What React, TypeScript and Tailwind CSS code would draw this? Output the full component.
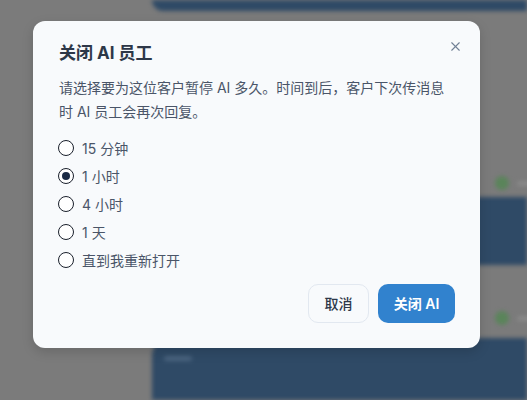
import { useState } from 'react';
import { X } from 'lucide-react';

const OPTIONS = ['15 分钟', '1 小时', '4 小时', '1 天', '直到我重新打开'];

function Backdrop() {
  // 모달 뒤 흐릿한 채팅 화면
  return (
    <div className="flex flex-col h-full pl-[152px] blur-[2px]">
      <div className="h-[11px] bg-[#2f4a66] rounded-bl-[18px]" />
      <div className="mt-[165px] h-[14px] flex items-center justify-end gap-2">
        <span className="w-[14px] h-[14px] shrink-0 rounded-full bg-[#5a845a]" />
        <span className="w-[24px] h-[5px] shrink-0 mr-[-14px] rounded bg-[#8a8a8a]" />
      </div>
      <div className="mt-[7px] h-[68px] bg-[#2f4a66]" />
      <div className="mt-[46px] h-[14px] flex items-center justify-end gap-2">
        <span className="w-[14px] h-[14px] shrink-0 rounded-full bg-[#5a845a]" />
        <span className="w-[24px] h-[5px] shrink-0 mr-[-14px] rounded bg-[#8a8a8a]" />
      </div>
      <div className="mt-[13px] flex-1 bg-[#2f4a66] rounded-tl-[18px] pl-[12px] pt-[18px]">
        <div className="w-[28px] h-[5px] rounded bg-[#4b6580]" />
      </div>
    </div>
  );
}

export default function App() {
  const [selected, setSelected] = useState(1);

  return (
    <div
      className="relative w-[527px] h-[400px] overflow-hidden bg-[#7b7b7b]"
      style={{ fontFamily: 'Inter, "Noto Sans CJK SC", sans-serif' }}
    >
      <Backdrop />

      {/* 모달 */}
      <div className="absolute left-[33px] top-[21px] w-[447px] h-[327px] bg-[#f8fafc] rounded-[12px] shadow-[0_4px_12px_rgba(0,0,0,0.15)] pl-[26px] pr-[25px] pt-[18px] pb-[25px] flex flex-col">
        <button className="absolute right-[17px] top-[17px] w-[16px] h-[16px] flex items-center justify-center text-[#718096]">
          <X className="w-[15px] h-[15px]" strokeWidth={1.8} />
        </button>

        <h2 className="text-[17px] leading-[28px] font-bold text-[#2d3748]">关闭 AI 员工</h2>

        <p className="mt-[9px] text-[14px] leading-[24px] text-[#4a5568]">
          请选择要为这位客户暂停 AI 多久。时间到后，客户下次传消息时 AI 员工会再次回复。
        </p>

        <div className="mt-[10px] flex flex-col">
          {OPTIONS.map((label, i) => (
            <label
              key={label}
              onClick={() => setSelected(i)}
              className="h-[28px] flex items-center gap-[8px] cursor-pointer"
            >
              <span className="w-[16px] h-[16px] -ml-[1px] rounded-full border-[1.5px] border-[#1a202c] flex items-center justify-center bg-white">
                {selected === i && <span className="w-[8px] h-[8px] rounded-full bg-[#1a2a44]" />}
              </span>
              <span className="text-[14px] text-[#4a5568]">{label}</span>
            </label>
          ))}
        </div>

        <div className="mt-auto flex justify-end gap-[9px]">
          <button className="h-[39px] w-[61px] rounded-[10px] border border-[#e2e8f0] bg-[#f8fafc] text-[14px] font-medium text-[#2d3748]">
            取消
          </button>
          <button className="h-[39px] w-[77px] rounded-[10px] bg-[#3182ce] text-[14px] font-semibold text-white">
            关闭 AI
          </button>
        </div>
      </div>
    </div>
  );
}
